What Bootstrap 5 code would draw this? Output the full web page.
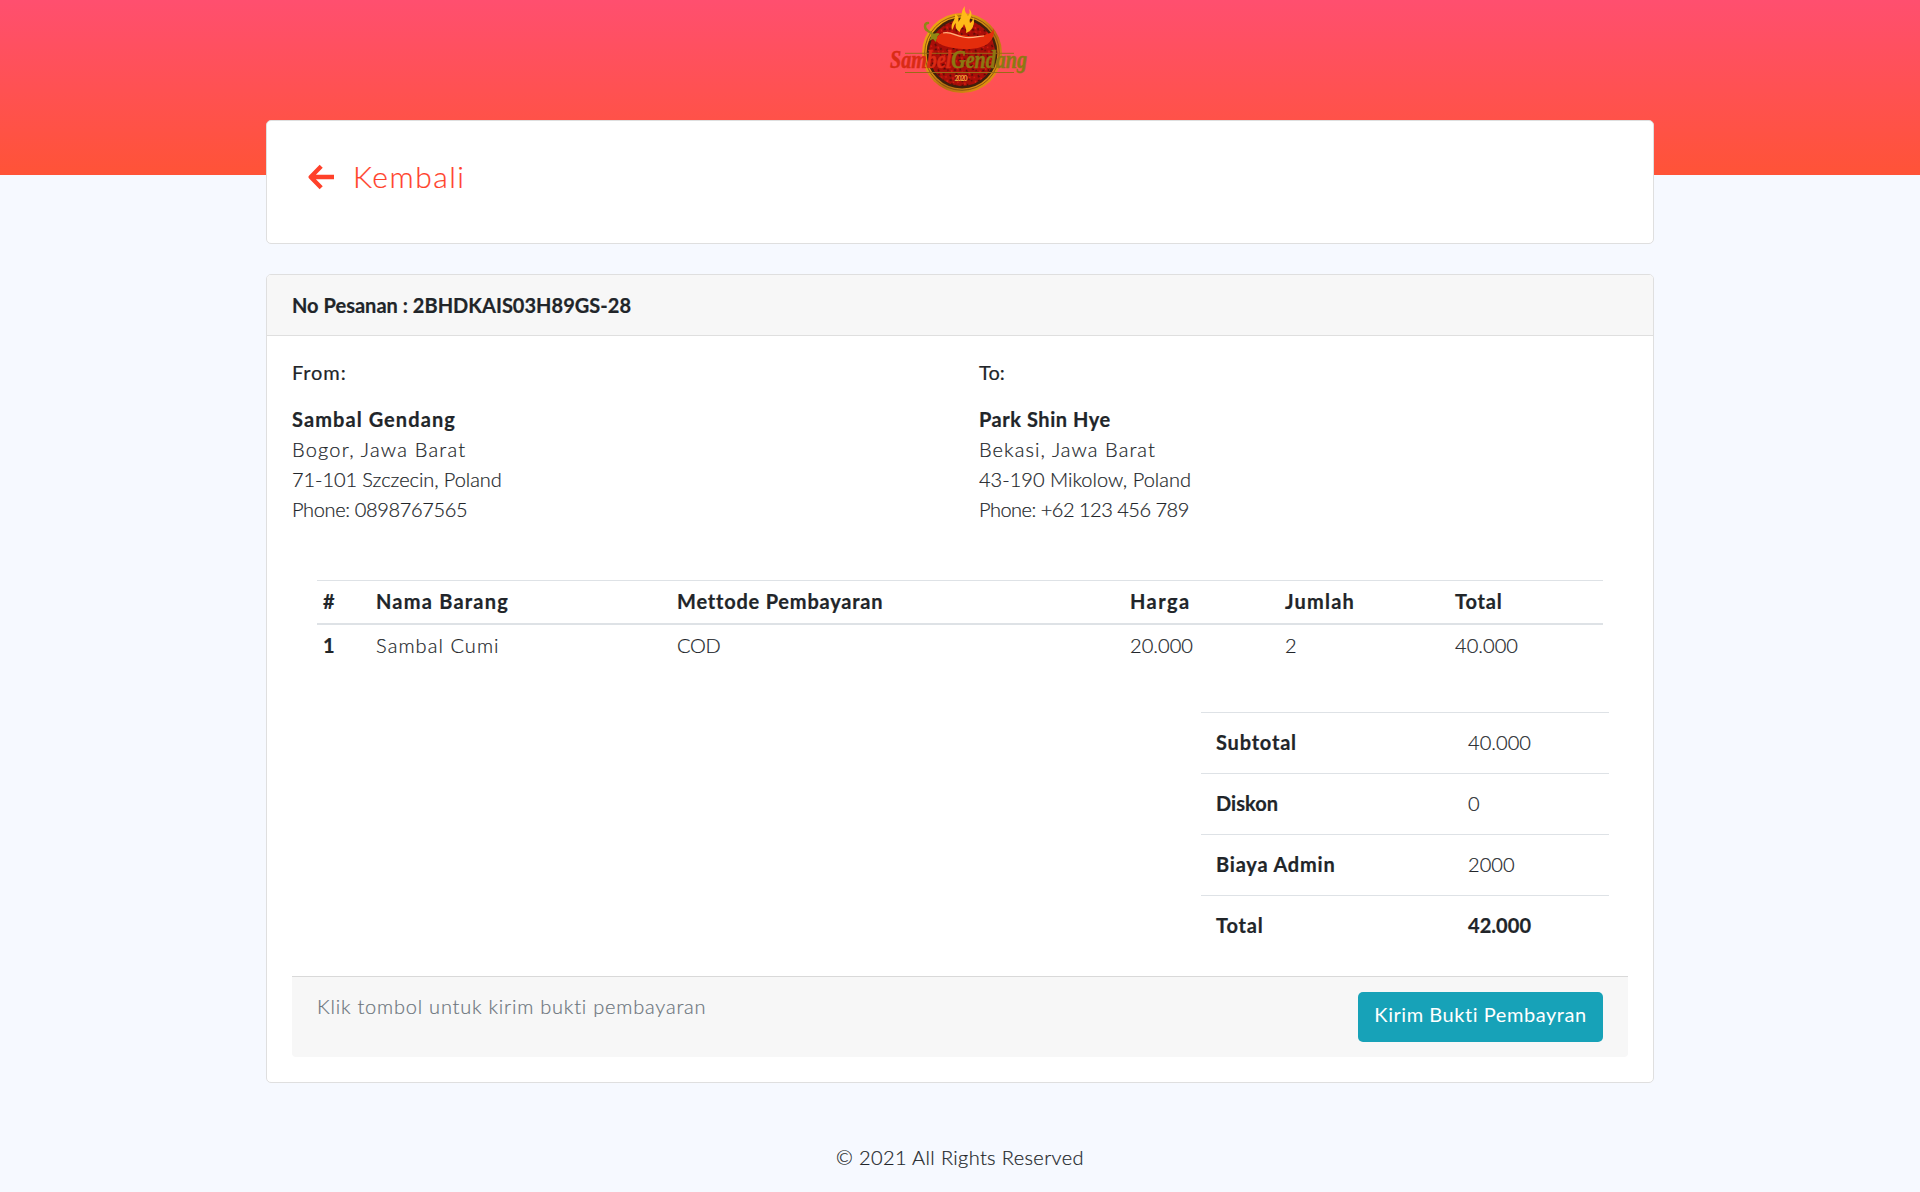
<!DOCTYPE html>
<html lang="id">
<head>
<meta charset="utf-8">
<meta name="viewport" content="width=device-width, initial-scale=1">
<title>Sambel Gendang - Detail Pesanan</title>
<link rel="stylesheet" href="https://cdn.jsdelivr.net/npm/bootstrap@5.3.0/dist/css/bootstrap.min.css">
<style>
  html { font-size: 20px; }
  body { font-family: Lato, "Open Sans", sans-serif; font-weight: 300; color: #212529; background: #f6f9ff; -webkit-text-stroke: .2px; }
  .hero { height: 175px; background: linear-gradient(#ff4f6f, #ff5337); }
  .hero svg { -webkit-text-stroke: 0; }
  .invoice-wrap { width: 1388px; margin: -55px auto 0; }
  .card { --bs-card-border-color: #dfdfdf; --bs-card-border-radius: 5px; --bs-card-inner-border-radius: 4px; --bs-card-cap-bg: #f7f7f7; --bs-card-color: #212529; }
  .back-card { height: 124px; margin-bottom: 30px; padding: 33px 41px 0; }
  .back-link { color: #ff412a; font-size: 30px; line-height: 46px; gap: 18px; }
  .back-link span { padding-bottom: 2px; line-height: 44px; }
  .order-head { padding: 15px 25px; }
  .order-body { padding: 24px 25px 25px; }
  .party-label { font-size: 20px; line-height: 24px; margin-bottom: 20px; font-weight: 400; }
  .party { width: 687px; }
  .items { width: 1286px; margin: 56px 0 0 25px; table-layout: fixed; color: inherit; }
  .items th, .items td { padding: 5px 6px 7px; border: 0 solid #dee2e6; border-top-width: 1px; }
  .items thead th { border-bottom-width: 2px; }
  .items tbody th, .items tbody td { border-top-width: 0; }
  .totals { width: 408px; margin: 45px 19px 0 auto; table-layout: fixed; color: inherit; }
  .totals td { padding: 14px 15px 16px; border: 0 solid #dee2e6; border-top-width: 1px; }
  .order-foot { height: 81px; margin-top: 20px; padding: 15px 25px; background: #f7f7f7; border-top: 1px solid #d9d9d9; border-radius: 0 0 4px 4px; color: #6c757d; }
  .foot-note { margin-top: -1px; }
  .btn-send { width: 245px; height: 50px; padding: 7px 0 0; border: 0; border-radius: 5px; background: #17a2b8; color: #fff; font-size: 20px; line-height: 30px; -webkit-text-stroke: 0; }
  .copyright { margin: 59px 0 0; }
  .sp-n4 { letter-spacing: -.5px; } .sp-n3 { letter-spacing: -.36px; } .sp-0 { letter-spacing: -.07px; }
  .sp-1 { letter-spacing: .02px; } .sp-3 { letter-spacing: .05px; } .sp-4 { letter-spacing: .37px; }
  .sp-6 { letter-spacing: .55px; } .sp-8 { letter-spacing: .79px; } .sp-9 { letter-spacing: .8px; }
  .sp-11 { letter-spacing: .9px; } .sp-12 { letter-spacing: 1.08px; } .sp-13 { letter-spacing: 1.22px; }
  .sp-15 { letter-spacing: 1.5px; } .sp-16 { letter-spacing: 1.45px; }
  .logo-script { font-family: "Liberation Serif", serif; font-style: italic; font-weight: 700; font-size: 25px; }
</style>
</head>
<body>
<header class="hero d-flex justify-content-center align-items-start">
  <svg width="160" height="100" viewBox="880 0 160 100" role="img" aria-label="Sambel Gendang">
    <defs>
      <pattern id="chili" width="13" height="11" patternUnits="userSpaceOnUse" patternTransform="rotate(24)">
        <rect width="13" height="11" fill="#a80e08"/>
        <path d="M1 1l2 1M8 2l1 2M3 6l2-1M10 8l1 1M6 9l2-1" stroke="#520b08" stroke-width="1.4"/>
        <path d="M5 2l1 2M1 7l1 2M8 6l-1 1M11 4l1 1" stroke="#e01b10" stroke-width="1.5"/>
      </pattern>
      <linearGradient id="gold" x1="0" y1="0" x2="1" y2="1">
        <stop offset="0" stop-color="#f5ad10"/><stop offset=".4" stop-color="#dc9212"/><stop offset=".6" stop-color="#b56d11"/><stop offset="1" stop-color="#f8a50e"/>
      </linearGradient>
    </defs>
    <circle cx="962" cy="53" r="40" fill="url(#gold)"/>
    <circle cx="962" cy="53" r="37.3" fill="none" stroke="#7b4b12" stroke-width=".8"/>
    <circle cx="962" cy="53" r="34.2" fill="url(#chili)" stroke="#40200c" stroke-width="2.4"/>
    <path d="M952 30c-2-8 4-9 3-16 4 2 4 5 3 8 5-4 2-11 7-16-1 5 1 7 3 10 2-2 2-4 1-7 6 6-1 9 1 14 2-1 3-3 3-6 3 7-1 14-7 16 1-4-1-6-2-9-1 4-4 4-4 8-4-2-5-5-4-9-3 3-2 5-4 7z" fill="#ffba18"/>
    <path d="M938 36c3-4 9-5 15-3 14 4 27 4 34 1 5-1 7-4 6-7 3 9-2 17-12 20-11 4-31 2-41-3-4-2-5-5-2-8z" fill="#e42d0c"/>
    <path d="M943 33c8-2 12 3 20 4 8 2 16-1 21-1" fill="none" stroke="#ffb27f" stroke-width="1.2"/>
    <path d="M928 23c-4 0-4 6 0 8 4 2 6 4 8 7" fill="none" stroke="#8e8813" stroke-width="2.5" stroke-linecap="round"/>
    <path d="M931 35c5-2 6-3 9-1-3 2-4 4-4 8l-3-3-4 2 2-4z" fill="#8e8813"/>
    <path d="M905 53.3h109M905 72.5h109" stroke="#9b6a17" stroke-width="1"/>
    <text class="logo-script" x="890" y="68" textLength="137" lengthAdjust="spacingAndGlyphs" fill="#d92b15" stroke-width=".5"><tspan stroke="#d92b15">Sambel</tspan><tspan fill="#8c7812" stroke="#8c7812">Gendang</tspan></text>
    <text x="954.5" y="81" font-size="7" font-weight="700" fill="#f1a23c" textLength="13">2020</text>
  </svg>
</header>

<main class="invoice-wrap">
  <div class="card back-card">
    <a href="#" class="back-link d-flex align-items-center text-decoration-none">
      <svg width="27" height="27" viewBox="0 0 27 27" aria-hidden="true"><path d="M13.2 2.2L2.7 13l10.5 10.8M3.5 13H26" fill="none" stroke="currentColor" stroke-width="4.3" stroke-linejoin="round"/></svg>
      <span class="sp-15">Kembali</span>
    </a>
  </div>

  <div class="card">
    <div class="card-header order-head fw-bold sp-1">No Pesanan : 2BHDKAIS03H89GS-28</div>
    <div class="card-body order-body">
      <div class="d-flex">
        <div class="party">
          <h6 class="party-label sp-11">From:</h6>
          <div class="fw-bold sp-12">Sambal Gendang</div>
          <div class="sp-13">Bogor, Jawa Barat</div>
          <div class="sp-0">71-101 Szczecin, Poland</div>
          <div class="sp-n3">Phone: 0898767565</div>
        </div>
        <div>
          <h6 class="party-label sp-3">To:</h6>
          <div class="fw-bold sp-6">Park Shin Hye</div>
          <div class="sp-12">Bekasi, Jawa Barat</div>
          <div class="sp-1">43-190 Mikolow, Poland</div>
          <div class="sp-n4">Phone: +62 123 456 789</div>
        </div>
      </div>

      <table class="items">
        <colgroup><col style="width:53px"><col style="width:301px"><col style="width:453px"><col style="width:155px"><col style="width:170px"><col></colgroup>
        <thead>
          <tr><th>#</th><th class="sp-13">Nama Barang</th><th class="sp-8">Mettode Pembayaran</th><th class="sp-16">Harga</th><th class="sp-13">Jumlah</th><th class="sp-8">Total</th></tr>
        </thead>
        <tbody>
          <tr><th>1</th><td class="sp-12">Sambal Cumi</td><td class="sp-n3">COD</td><td class="sp-3">20.000</td><td>2</td><td class="sp-3">40.000</td></tr>
        </tbody>
      </table>

      <table class="totals">
        <colgroup><col style="width:252px"><col></colgroup>
        <tbody>
          <tr><td class="fw-bold sp-9">Subtotal</td><td class="sp-3">40.000</td></tr>
          <tr><td class="fw-bold sp-3">Diskon</td><td>0</td></tr>
          <tr><td class="fw-bold sp-9">Biaya Admin</td><td class="sp-3">2000</td></tr>
          <tr><td class="fw-bold sp-8">Total</td><td class="fw-bold sp-3">42.000</td></tr>
        </tbody>
      </table>

      <div class="order-foot d-flex justify-content-between align-items-start">
        <span class="foot-note sp-8">Klik tombol untuk kirim bukti pembayaran</span>
        <button type="button" class="btn btn-send d-flex justify-content-center align-items-start fw-normal sp-6">Kirim Bukti Pembayran</button>
      </div>
    </div>
  </div>
</main>

<footer class="copyright text-center"><span class="sp-4">© 2021 All Rights Reserved</span></footer>
<script src="https://cdn.jsdelivr.net/npm/bootstrap@5.3.0/dist/js/bootstrap.bundle.min.js"></script>
</body>
</html>
